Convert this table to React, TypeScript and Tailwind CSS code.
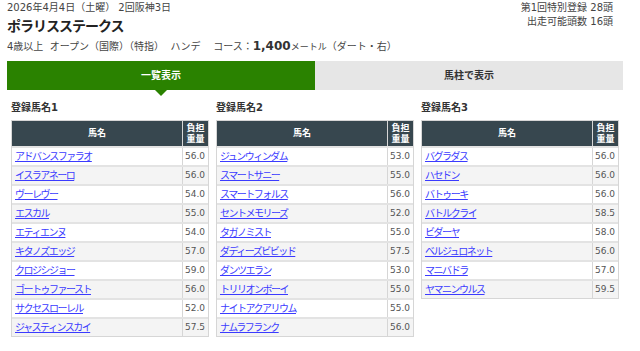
import React from 'react';

type Horse = { name: string; weight: string };

const columns: { title: string; horses: Horse[] }[] = [
  {
    title: '登録馬名1',
    horses: [
      { name: 'アドバンスファラオ', weight: '56.0' },
      { name: 'イスラアネーロ', weight: '56.0' },
      { name: 'ヴーレヴー', weight: '54.0' },
      { name: 'エスカル', weight: '55.0' },
      { name: 'エティエンヌ', weight: '54.0' },
      { name: 'キタノズエッジ', weight: '57.0' },
      { name: 'クロジシジョー', weight: '59.0' },
      { name: 'ゴートゥファースト', weight: '56.0' },
      { name: 'サクセスローレル', weight: '52.0' },
      { name: 'ジャスティンスカイ', weight: '57.5' },
    ],
  },
  {
    title: '登録馬名2',
    horses: [
      { name: 'ジュンウィンダム', weight: '53.0' },
      { name: 'スマートサニー', weight: '55.0' },
      { name: 'スマートフォルス', weight: '56.0' },
      { name: 'セントメモリーズ', weight: '52.0' },
      { name: 'タガノミスト', weight: '55.0' },
      { name: 'ダディーズビビッド', weight: '57.5' },
      { name: 'ダンツエラン', weight: '53.0' },
      { name: 'トリリオンボーイ', weight: '55.0' },
      { name: 'ナイトアクアリウム', weight: '55.0' },
      { name: 'ナムラフランク', weight: '56.0' },
    ],
  },
  {
    title: '登録馬名3',
    horses: [
      { name: 'バグラダス', weight: '56.0' },
      { name: 'ハセドン', weight: '56.0' },
      { name: 'バトゥーキ', weight: '56.0' },
      { name: 'バトルクライ', weight: '58.5' },
      { name: 'ビダーヤ', weight: '58.0' },
      { name: 'ベルジュロネット', weight: '56.0' },
      { name: 'マニバドラ', weight: '57.0' },
      { name: 'ヤマニンウルス', weight: '59.5' },
    ],
  },
];

const EntryTable = ({ title, horses }: { title: string; horses: Horse[] }) => (
  <div className="w-[198px]">
    <div className="h-[16px] mt-[10px] text-[10px] font-bold leading-[16px] text-[#333]">{title}</div>
    <div className="mt-[4px] border border-[#d6d6d6]">
      <div className="grid grid-cols-[1fr_25px] h-[25px] bg-[#37474f] text-white font-bold text-[9px]">
        <div className="flex items-center justify-center border-r border-[#d6d6d6]">馬名</div>
        <div className="flex flex-col items-center justify-center leading-[11px]">
          <span>負担</span>
          <span>重量</span>
        </div>
      </div>
      {horses.map((h, i) => (
        <div
          key={h.name}
          className={`grid grid-cols-[1fr_25px] h-[19px] border-t-2 border-[#e3e3e3] ${i % 2 === 1 ? 'bg-[#f4f4f4]' : 'bg-white'}`}
        >
          <div className="flex items-center pl-[3px] border-r border-[#d6d6d6]">
            <a href="#" className="text-[10px] tracking-[-1.5px] text-[#3b3bff] underline underline-offset-1">
              {h.name}
            </a>
          </div>
          <div className="flex items-center justify-end pr-[3px] text-[9px] text-[#555] font-['DejaVu_Sans']">{h.weight}</div>
        </div>
      ))}
    </div>
  </div>
);

export default function App() {
  return (
    <div className="w-[640px] h-[351px] overflow-hidden bg-white text-[#333] font-['DejaVu_Sans','Noto_Sans_CJK_JP',sans-serif]">
      <div className="flex justify-between pl-[7px] pr-[27px]">
        <div>
          <div className="h-[16px] text-[10px] leading-[16px] text-[#444]">2026年4月4日（土曜） 2回阪神3日</div>
          <div className="h-[20px] text-[14px] font-bold leading-[20px] tracking-[-1px] text-[#222]">ポラリスステークス</div>
          <div className="h-[20px] text-[10px] leading-[20px] text-[#444] whitespace-nowrap">
            4歳以上&nbsp;&nbsp;オープン（国際）（特指）&nbsp;&nbsp;ハンデ&nbsp;&nbsp;&nbsp;&nbsp;コース：
            <span className="text-[12px] font-bold text-[#333]">1,400</span>
            <span className="text-[9px]">メートル</span>（ダート・右）
          </div>
        </div>
        <div className="pt-[1px] text-right text-[10px] text-[#444]">
          <div className="h-[14px] leading-[14px]">第1回特別登録&nbsp;28頭</div>
          <div className="h-[14px] leading-[14px]">出走可能頭数&nbsp;16頭</div>
        </div>
      </div>

      <div className="mx-[7px] mt-[5px] flex h-[29px] w-[616px]">
        <div className="relative flex-1 flex items-center justify-center bg-[#2a8200] text-white text-[10px] font-bold">
          一覧表示
          <span className="absolute left-1/2 -translate-x-1/2 top-full w-0 h-0 border-l-[6px] border-r-[6px] border-t-[6px] border-l-transparent border-r-transparent border-t-[#2a8200]" />
        </div>
        <div className="flex-1 flex items-center justify-center bg-[#e6e6e6] text-[10px] font-bold text-[#333]">
          馬柱で表示
        </div>
      </div>

      <div className="flex gap-[7px] pl-[11px]">
        {columns.map((c) => (
          <EntryTable key={c.title} title={c.title} horses={c.horses} />
        ))}
      </div>
    </div>
  );
}
